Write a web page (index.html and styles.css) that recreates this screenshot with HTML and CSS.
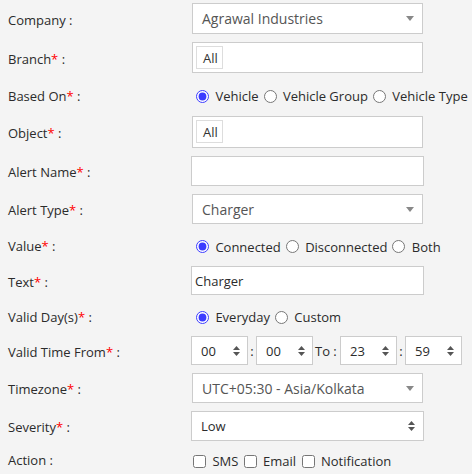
FILE: index.html
```html
<!DOCTYPE html>
<html>
<head>
<meta charset="utf-8">
<link rel="stylesheet" href="styles.css">
</head>
<body>
<div class="form">
  <div class="row h31">
    <div class="lbl">Company :</div>
    <div class="s2"><span>Agrawal Industries</span><i class="caret"></i></div>
  </div>
  <div class="row h31">
    <div class="lbl">Branch<span class="req">*</span> :</div>
    <div class="s2 multi"><span class="tag">All</span></div>
  </div>
  <div class="row h27">
    <div class="lbl">Based On<span class="req">*</span> :</div>
    <div class="opts"><input type="radio" name="b" checked> Vehicle<input type="radio" name="b"> Vehicle Group<input type="radio" name="b"> Vehicle Type</div>
  </div>
  <div class="row h32">
    <div class="lbl">Object<span class="req">*</span> :</div>
    <div class="s2 multi"><span class="tag">All</span></div>
  </div>
  <div class="row h30">
    <div class="lbl">Alert Name<span class="req">*</span> :</div>
    <div class="inp"></div>
  </div>
  <div class="row h30">
    <div class="lbl">Alert Type<span class="req">*</span> :</div>
    <div class="s2"><span>Charger</span><i class="caret"></i></div>
  </div>
  <div class="row h26">
    <div class="lbl">Value<span class="req">*</span> :</div>
    <div class="opts"><input type="radio" name="v" checked> Connected<input type="radio" name="v"> Disconnected<input type="radio" name="v"> Both</div>
  </div>
  <div class="row h29">
    <div class="lbl">Text<span class="req">*</span> :</div>
    <div class="inp txt">Charger</div>
  </div>
  <div class="row h25">
    <div class="lbl">Valid Day(s)<span class="req">*</span> :</div>
    <div class="opts"><input type="radio" name="d" checked> Everyday<input type="radio" name="d"> Custom</div>
  </div>
  <div class="row h29">
    <div class="lbl">Valid Time From<span class="req">*</span> :</div>
    <div class="time">
      <div class="tsel"><span>00</span><svg class="ud" viewBox="0 0 7 10" width="7" height="10"><path d="M0 4 L3.5 0 L7 4 Z M0 6 L7 6 L3.5 10 Z"/></svg></div>
      <span class="sep">:</span>
      <div class="tsel"><span>00</span><svg class="ud" viewBox="0 0 7 10" width="7" height="10"><path d="M0 4 L3.5 0 L7 4 Z M0 6 L7 6 L3.5 10 Z"/></svg></div>
      <span class="to">To :</span>
      <div class="tsel"><span>23</span><svg class="ud" viewBox="0 0 7 10" width="7" height="10"><path d="M0 4 L3.5 0 L7 4 Z M0 6 L7 6 L3.5 10 Z"/></svg></div>
      <span class="sep">:</span>
      <div class="tsel"><span>59</span><svg class="ud" viewBox="0 0 7 10" width="7" height="10"><path d="M0 4 L3.5 0 L7 4 Z M0 6 L7 6 L3.5 10 Z"/></svg></div>
    </div>
  </div>
  <div class="row h30">
    <div class="lbl">Timezone<span class="req">*</span> :</div>
    <div class="s2"><span>UTC+05:30 - Asia/Kolkata</span><i class="caret"></i></div>
  </div>
  <div class="row h30">
    <div class="lbl">Severity<span class="req">*</span> :</div>
    <div class="nsel"><span>Low</span><svg class="ud" viewBox="0 0 7 10" width="7" height="10"><path d="M0 4 L3.5 0 L7 4 Z M0 6 L7 6 L3.5 10 Z"/></svg></div>
  </div>
  <div class="row h20">
    <div class="lbl">Action :</div>
    <div class="opts checks"><input type="checkbox"> SMS <input type="checkbox"> Email <input type="checkbox"> Notification</div>
  </div>
</div>
</body>
</html>
```

FILE: styles.css
```css
html, body {
  margin: 0;
  padding: 0;
  background: #f4f4f4;
}
body {
  font-family: "Open Sans", "Liberation Sans", sans-serif;
  font-size: 13px;
  color: #2b2b2b;
}
.form {
  display: flex;
  flex-direction: column;
  gap: 8px;
  padding: 3px 0 0 8px;
}
.row {
  display: flex;
  align-items: center;
}
.h20 { height: 20px; }
.h25 { height: 25px; }
.h26 { height: 26px; }
.h27 { height: 27px; }
.h29 { height: 29px; }
.h30 { height: 30px; }
.h31 { height: 31px; }
.h32 { height: 32px; }
.row > * { align-self: stretch; }
.lbl {
  width: 183px;
  flex: none;
  display: flex;
  align-items: center;
  padding-top: 2px;
  box-sizing: border-box;
  white-space: pre;
}
.req { color: #ff0000; }
.s2 {
  box-sizing: border-box;
  width: 231px;
  margin-left: 1px;
  background: #fff;
  border: 1px solid #cccccc;
  display: flex;
  align-items: center;
  padding-left: 9px;
  color: #555;
  font-size: 14px;
}
.caret {
  margin-left: auto;
  margin-right: 8px;
  width: 0;
  height: 0;
  border-left: 4px solid transparent;
  border-right: 4px solid transparent;
  border-top: 5px solid #888;
}
.s2.multi {
  padding: 3px;
  align-items: stretch;
  font-size: 13px;
}
.tag {
  box-sizing: border-box;
  width: 27px;
  height: 23px;
  border: 1px solid #dddddd;
  display: flex;
  align-items: center;
  padding-left: 6px;
  color: #333;
}
.inp {
  box-sizing: border-box;
  width: 233px;
  background: #fff;
  border: 1px solid #cccccc;
  display: flex;
  align-items: center;
}
.inp.txt { padding-left: 3px; }
.opts {
  display: flex;
  align-items: center;
  white-space: pre;
  padding-top: 3px;
  box-sizing: border-box;
}
.opts input[type="radio"] {
  accent-color: #3b3bff;
  margin: 0 3px 0 5px;
  width: 13px;
  height: 13px;
}
.checks input[type="checkbox"] {
  margin: 1px 3px 0 2px;
  width: 13px;
  height: 13px;
}
.time {
  display: flex;
  align-items: stretch;
}
.tsel, .nsel {
  box-sizing: border-box;
  background: #fff;
  border: 1px solid #cccccc;
  display: flex;
  align-items: center;
  padding-left: 9px;
}
.tsel { width: 57px; }
.nsel { width: 233px; }
.ud {
  margin-left: auto;
  margin-right: 8px;
  fill: #555;
}
.tsel .ud { margin-right: 7px; }
.sep {
  width: 8px;
  display: flex;
  align-items: center;
  justify-content: center;
}
.to {
  width: 27px;
  display: flex;
  align-items: center;
  padding-left: 2px;
  box-sizing: border-box;
  white-space: pre;
}
```
